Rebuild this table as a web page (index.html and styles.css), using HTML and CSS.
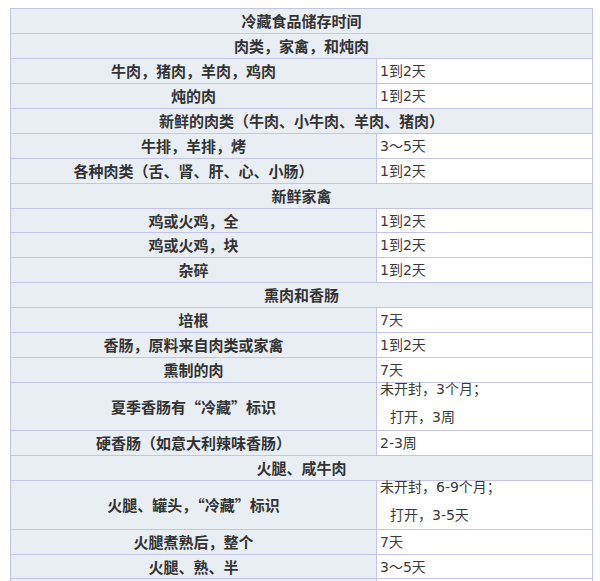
FILE: index.html
```html
<!DOCTYPE html>
<html lang="zh">
<head>
<meta charset="utf-8">
<title>冷藏食品储存时间</title>
<link rel="stylesheet" href="styles.css">
</head>
<body>
<table class="storage">
  <colgroup><col class="col-item"><col class="col-time"></colgroup>
  <tr><th colspan="2" class="section">冷藏食品储存时间</th></tr>
  <tr><th colspan="2" class="section">肉类，家禽，和炖肉</th></tr>
  <tr><th class="item">牛肉，猪肉，羊肉，鸡肉</th><td class="time">1到2天</td></tr>
  <tr><th class="item">炖的肉</th><td class="time">1到2天</td></tr>
  <tr><th colspan="2" class="section">新鲜的肉类（牛肉、小牛肉、羊肉、猪肉）</th></tr>
  <tr><th class="item">牛排，羊排，烤</th><td class="time">3～5天</td></tr>
  <tr><th class="item">各种肉类（舌、肾、肝、心、小肠）</th><td class="time">1到2天</td></tr>
  <tr><th colspan="2" class="section">新鲜家禽</th></tr>
  <tr class="short"><th class="item">鸡或火鸡，全</th><td class="time">1到2天</td></tr>
  <tr><th class="item">鸡或火鸡，块</th><td class="time">1到2天</td></tr>
  <tr><th class="item">杂碎</th><td class="time">1到2天</td></tr>
  <tr><th colspan="2" class="section">熏肉和香肠</th></tr>
  <tr><th class="item">培根</th><td class="time">7天</td></tr>
  <tr><th class="item">香肠，原料来自肉类或家禽</th><td class="time">1到2天</td></tr>
  <tr><th class="item">熏制的肉</th><td class="time">7天</td></tr>
  <tr class="tall"><th class="item">夏季香肠有“冷藏”标识</th><td class="time"><div class="line">未开封，3个月；</div><div class="line second">打开，3周</div></td></tr>
  <tr><th class="item">硬香肠（如意大利辣味香肠）</th><td class="time">2-3周</td></tr>
  <tr><th colspan="2" class="section">火腿、咸牛肉</th></tr>
  <tr class="tall taller"><th class="item">火腿、罐头，“冷藏”标识</th><td class="time"><div class="line">未开封，6-9个月；</div><div class="line second">打开，3-5天</div></td></tr>
  <tr><th class="item">火腿煮熟后，整个</th><td class="time">7天</td></tr>
  <tr class="short"><th class="item">火腿、熟、半</th><td class="time">3～5天</td></tr>
  <tr><th class="item"></th><td class="time"></td></tr>
</table>
</body>
</html>
```

FILE: styles.css
```css
html, body {
  margin: 0;
  background: #ffffff;
}
body {
  padding: 8px 0 0 10px;
}
.storage {
  border-collapse: collapse;
  width: 582px;
  table-layout: fixed;
  border: 1px solid #b0b0dc;
}
.col-item {
  width: 366px;
}
.col-time {
  width: 216px;
}
.storage th,
.storage td {
  border: 1px solid #c4c4e8;
  height: 25px;
  padding: 0 4px;
  line-height: 22px;
  color: #333333;
  box-sizing: border-box;
}
.storage th {
  background: #e9eef3;
  font-family: "Noto Sans CJK SC", "Noto Sans CJK TC", sans-serif;
  font-size: 15px;
  font-weight: bold;
  text-align: center;
}
.storage td.time {
  background: #ffffff;
  font-family: "DejaVu Sans", "Noto Sans CJK SC", sans-serif;
  font-size: 14px;
  font-weight: normal;
  text-align: left;
  padding-left: 3px;
  color: #3a3a3a;
}
.storage tr.short th,
.storage tr.short td {
  height: 24px;
}
.storage tr.tall th,
.storage tr.tall td {
  height: 48px;
}
.storage tr.taller th,
.storage tr.taller td {
  height: 49px;
}
.storage tr.tall td.time {
  vertical-align: top;
  padding-top: 0;
}
.line {
  line-height: 12px;
  padding-top: 0;
}
.line.second {
  margin-top: 16px;
  padding-left: 10px;
}
```
